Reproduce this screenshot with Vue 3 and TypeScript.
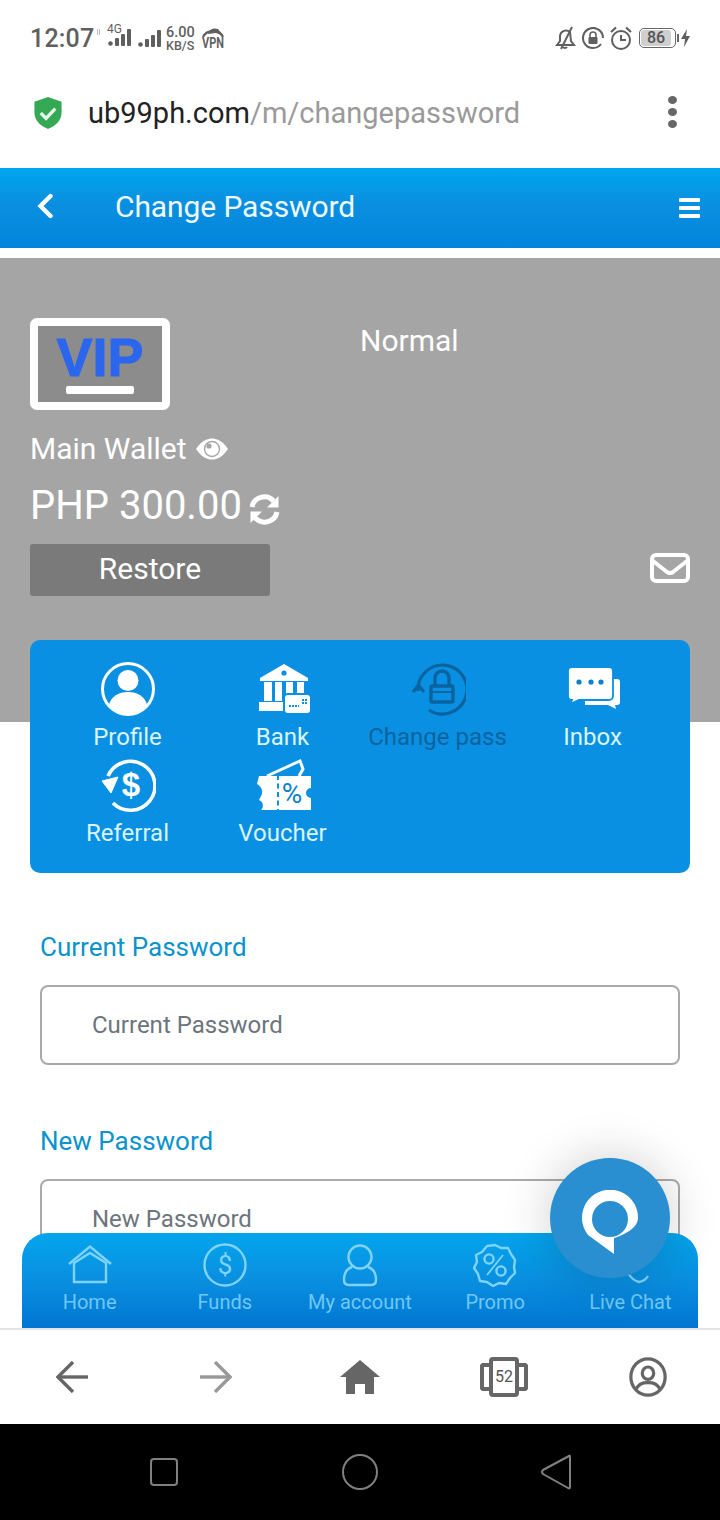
<script setup lang="ts">
const title: string = 'Change Password'
</script>

<template>
  <div class="phone">
    <div class="status">
      <div class="status-left">
        <span class="time">12:07</span>
        <i class="sim-mark"></i>
        <span class="sim1">
          <span class="fourg">4G</span>
          <svg width="23" height="17" viewBox="0 0 23 17"><g fill="#5f5f5f"><circle cx="2.5" cy="14.5" r="2.3"/><rect x="7" y="9" width="4" height="8" rx="1"/><rect x="13" y="5" width="4" height="12" rx="1"/><rect x="19" y="0" width="4" height="17" rx="1"/></g></svg>
        </span>
        <svg class="sig2" width="23" height="17" viewBox="0 0 23 17"><g fill="#5f5f5f"><circle cx="2.5" cy="14.5" r="2.3"/><rect x="7" y="9" width="4" height="8" rx="1"/><rect x="13" y="5" width="4" height="12" rx="1"/><rect x="19" y="0" width="4" height="17" rx="1"/></g></svg>
        <span class="speed"><span>6.00</span><span class="kb">KB/S</span></span>
        <span class="vpn">
          <svg width="24" height="11" viewBox="0 0 24 11"><path d="M2 11 A11 10 0 0 1 22 11" fill="none" stroke="#5f5f5f" stroke-width="2.2"/><path d="M7 8 A7 6 0 0 1 17 3 L22 9 L15 7 Z" fill="#5f5f5f"/></svg>
          <b>VPN</b>
        </span>
      </div>
      <div class="status-right">
        <svg width="22" height="24" viewBox="0 0 22 24" fill="none" stroke="#5f5f5f" stroke-width="2"><path d="M3 19 L6 15 V10 A6 6 0 0 1 16 6 L17 15 L20 19 Z"/><path d="M7 23 L18 1"/><path d="M9 21 a2.5 2.5 0 0 0 4 0"/></svg>
        <svg width="22" height="22" viewBox="0 0 22 22" fill="none" stroke="#5f5f5f" stroke-width="2"><path d="M19 17 A10 10 0 1 1 21 11"/><rect x="6.500" y="10" width="9" height="7" rx="1" fill="#5f5f5f" stroke="none"/><path d="M8 10 V8 a3 3 0 0 1 6 0 V10" stroke-width="1.6"/></svg>
        <svg width="22" height="24" viewBox="0 0 22 24" fill="none" stroke="#5f5f5f" stroke-width="2"><circle cx="11" cy="14" r="9"/><path d="M11 9 V14 H16"/><path d="M1 6 L6 1.500 M21 6 L16 1.500" stroke-width="2.2"/></svg>
        <span class="battery"><span class="battery-fill">86</span></span>
        <span class="battery-cap"></span>
        <svg class="bolt" width="9" height="18" viewBox="0 0 9 18"><path d="M6 0 L0 10 H4 L3 18 L9 7 H5 Z" fill="#5f5f5f"/></svg>
      </div>
    </div>

    <div class="urlbar">
      <svg class="shield" width="28" height="32" viewBox="0 0 28 33"><path d="M14 0 L28 5 V16 C28 25 21 30 14 33 C7 30 0 25 0 16 V5 Z" fill="#34a853"/><path d="M6.500 16.500 L12 22 L21.500 12" fill="none" stroke="#e8f5ea" stroke-width="3.400"/></svg>
      <div class="url"><span class="host">ub99ph.com</span><span class="path">/m/changepassword</span></div>
      <div class="kebab"><i></i><i></i><i></i></div>
    </div>

    <header class="topbar">
      <svg class="back" width="18" height="26" viewBox="0 0 18 26"><path d="M14.500 3 L4.500 13 L14.500 23" fill="none" stroke="#fff" stroke-width="4.400" stroke-linecap="round"/></svg>
      <h1>{{ title }}</h1>
      <div class="burger"><i></i><i></i><i></i></div>
    </header>

    <main class="viewport">
      <section class="hero">
        <div class="hero-top">
          <div class="vip"><span class="vip-text">VIP</span><span class="vip-bar"></span></div>
          <div class="level">Normal</div>
        </div>
        <div class="wallet">
          <span>Main Wallet</span>
          <svg width="34" height="22" viewBox="0 0 34 22"><path d="M1 11 C7 2 13 0.500 17 0.500 C21 0.500 27 2 33 11 C27 20 21 21.500 17 21.500 C13 21.500 7 20 1 11 Z" fill="#fff"/><circle cx="17" cy="11" r="8.200" fill="#a5a5a5"/><circle cx="17" cy="11" r="6.800" fill="#fff"/><circle cx="14" cy="8" r="2.600" fill="#a5a5a5"/></svg>
        </div>
        <div class="amount">
          <span>PHP 300.00</span>
          <svg width="31" height="31" viewBox="0 0 31 31" fill="none"><path d="M3 13 A12.500 12.500 0 0 1 24.500 7" stroke="#fff" stroke-width="5"/><path d="M29.500 2 V13.500 H18 Z" fill="#fff"/><path d="M28 18 A12.500 12.500 0 0 1 6.500 24" stroke="#fff" stroke-width="5"/><path d="M1.500 29 V17.500 H13 Z" fill="#fff"/></svg>
        </div>
        <div class="actions">
          <button class="restore" type="button">Restore</button>
          <svg class="mail" width="40" height="30" viewBox="0 0 40 30" fill="none" stroke="#fff" stroke-width="4"><rect x="2" y="2" width="36" height="26" rx="4"/><path d="M3 8 L17 19 Q20 21 23 19 L37 8"/></svg>
        </div>
      </section>

      <nav class="tiles">
        <a class="tile">
          <svg width="56" height="56" viewBox="0 0 56 56"><circle cx="28" cy="27" r="25.500" fill="none" stroke="#fff" stroke-width="3"/><circle cx="28" cy="18.500" r="10.500" fill="#fff"/><path d="M9 43 C11 34 19 30 28 30 C37 30 45 34 47 43 C42 49 35 52 28 52 C21 52 14 49 9 43 Z" fill="#fff"/></svg>
          <span>Profile</span>
        </a>
        <a class="tile">
          <svg width="56" height="56" viewBox="0 0 56 56" fill="#fff"><path d="M29 2 L53 16 V19 H5 V16 Z"/><rect x="9" y="20" width="8" height="19"/><rect x="20" y="20" width="7" height="19"/><rect x="31" y="20" width="7" height="19"/><rect x="42" y="20" width="7" height="14"/><rect x="4" y="40" width="26" height="9"/><rect x="29" y="32" width="27" height="20" rx="4" stroke="#0a90e2" stroke-width="2"/><circle cx="29" cy="11" r="2.600" fill="#0a90e2"/><path d="M34 44 H44 M47 38 H52 M47 41 H52" stroke="#0a90e2" stroke-width="1.800" stroke-dasharray="2 1"/></svg>
          <span>Bank</span>
        </a>
        <a class="tile active">
          <svg width="56" height="56" viewBox="0 0 56 56" fill="none" stroke="#0a639f" stroke-width="3.200"><path d="M8 29 A24.500 24.500 0 1 1 19 48"/><path d="M3 30 L8.500 23 L14 30"/><path d="M25 24 V16 a7 7 0 0 1 14 0 V24" stroke-width="3.400"/><rect x="21" y="24" width="22" height="16" rx="1.500" stroke-width="3.400"/><path d="M21 30 H43" stroke-width="1.800"/></svg>
          <span>Change pass</span>
        </a>
        <a class="tile">
          <svg width="56" height="56" viewBox="0 0 56 56"><path d="M20 17 H52 a3 3 0 0 1 3 3 V40 a3 3 0 0 1 -3 3 H50 L51 47 L43 43 H20 Z" fill="#fff"/><path d="M7 5 H44 a4 4 0 0 1 4 4 V34 a4 4 0 0 1 -4 4 H14 L5 42 L7 38 A4 4 0 0 1 3 34 V9 a4 4 0 0 1 4 -4 Z" fill="#fff" stroke="#0a90e2" stroke-width="1.800"/><g fill="#0b7fc7"><circle cx="14" cy="20" r="2.600"/><circle cx="26" cy="20" r="2.600"/><circle cx="36" cy="20" r="2.600"/></g></svg>
          <span>Inbox</span>
        </a>
        <a class="tile">
          <svg width="56" height="56" viewBox="0 0 56 56" fill="none"><path d="M8 18 A24.500 24.500 0 1 1 13 45" stroke="#fff" stroke-width="3.600"/><path d="M2 23 L18 19 L11 35 Z" fill="#fff" stroke="#fff" stroke-width="1" stroke-linejoin="round"/><text x="31" y="38" text-anchor="middle" font-family="'Liberation Sans',sans-serif" font-weight="700" font-size="33" fill="#fff">$</text></svg>
          <span>Referral</span>
        </a>
        <a class="tile">
          <svg width="56" height="56" viewBox="0 0 56 56"><path d="M12 18 L45 3 L48 11 L44 18" fill="none" stroke="#fff" stroke-width="3"/><path d="M4 18 H56 V30 a5 5 0 0 0 0 10 V52 H6 a6 6 0 0 0 -2 -10 L7 36 a9 9 0 0 0 -5 -10 Z" fill="#fff"/><path d="M23 17 V54" stroke="#0a90e2" stroke-width="2" stroke-dasharray="5 3.500"/><text x="37" y="45" text-anchor="middle" font-family="Roboto,sans-serif" font-weight="400" font-size="28" fill="#0a7fc9">%</text></svg>
          <span>Voucher</span>
        </a>
      </nav>

      <form class="form" @submit.prevent>
        <label class="field">
          <span>Current Password</span>
          <input type="text" placeholder="Current Password" />
        </label>
        <label class="field">
          <span>New Password</span>
          <input type="text" placeholder="New Password" />
        </label>
      </form>

      <nav class="tabbar">
        <a class="tab">
          <svg width="46" height="40" viewBox="0 0 46 40" fill="none" stroke="#7fd3f8" stroke-width="2.400"><path d="M2 19 L23 1.500 L44 19"/><path d="M7 18 L23 8 L39 18 V37 H7 Z"/></svg>
          <span>Home</span>
        </a>
        <a class="tab">
          <svg width="46" height="44" viewBox="0 0 46 44"><circle cx="23" cy="22" r="20.500" fill="none" stroke="#7fd3f8" stroke-width="2.400"/><text x="23" y="31" text-anchor="middle" font-family="Roboto,sans-serif" font-size="26" fill="#7fd3f8">$</text></svg>
          <span>Funds</span>
        </a>
        <a class="tab">
          <svg width="36" height="42" viewBox="0 0 36 42" fill="none" stroke="#7fd3f8" stroke-width="2.400"><circle cx="18" cy="13" r="11.500"/><path d="M10 23 C4 25 2 30 2 36 Q2 41 7 41 H29 Q34 41 34 36 C34 30 32 25 26 23"/></svg>
          <span>My account</span>
        </a>
        <a class="tab">
          <svg width="44" height="44" viewBox="0 0 44 44" fill="none" stroke="#7fd3f8" stroke-width="2.400"><path d="M22 2 L28 5 L35 5 L38 11 L42 17 L41 24 L42 30 L37 35 L33 41 L26 40 L20 43 L14 39 L7 38 L5 31 L1 25 L4 19 L3 12 L9 9 L14 3 Z" stroke-linejoin="round"/><circle cx="16" cy="16" r="4.600"/><circle cx="28" cy="28" r="4.600"/><path d="M30 12 L14 32" stroke-width="1.800"/></svg>
          <span>Promo</span>
        </a>
        <a class="tab">
          <svg width="44" height="44" viewBox="0 0 44 44" fill="none" stroke="#7fd3f8" stroke-width="2.400"><path d="M20 30 Q24 37 31 39 Q37 38 40 33"/></svg>
          <span>Live Chat</span>
        </a>
      </nav>

      <button class="fab" type="button" aria-label="Chat">
        <svg width="60" height="66" viewBox="0 0 60 66"><path d="M34 48 C44 45 58 38 58 28 A28 28 0 1 0 8 45 L34 64 Z" fill="#fff"/><circle cx="30" cy="29" r="18" fill="#2a8fd0"/></svg>
      </button>
    </main>

    <div class="browserbar">
      <svg width="32" height="32" viewBox="0 0 32 32" fill="none" stroke="#666" stroke-width="3.400"><path d="M2 16 H32"/><path d="M17 1 L2 16 L17 31"/></svg>
      <svg width="32" height="32" viewBox="0 0 32 32" fill="none" stroke="#999" stroke-width="3.400"><path d="M0 16 H30"/><path d="M15 1 L30 16 L15 31"/></svg>
      <svg width="40" height="34" viewBox="0 0 40 34"><path d="M20 0 L40 17 H34 V34 H25 V24 H15 V34 H6 V17 H0 Z" fill="#666"/></svg>
      <span class="tabs-count">
        <span class="wing wing-left"></span><span class="count">52</span><span class="wing wing-right"></span>
      </span>
      <svg width="40" height="40" viewBox="0 0 40 42" fill="none" stroke="#666" stroke-width="3.400"><ellipse cx="20" cy="21" rx="18" ry="19"/><ellipse cx="20" cy="17" rx="6" ry="6.500"/><path d="M7 35 C10 28 14 27 20 27 C26 27 30 28 33 35"/></svg>
    </div>

    <div class="sysbar">
      <svg width="28" height="28" viewBox="0 0 28 28" fill="none" stroke="#808080" stroke-width="2"><rect x="1" y="1" width="26" height="26" rx="3"/></svg>
      <svg width="36" height="36" viewBox="0 0 36 36" fill="none" stroke="#808080" stroke-width="2"><circle cx="18" cy="18" r="17"/></svg>
      <svg width="30" height="36" viewBox="0 0 30 36" fill="none" stroke="#808080" stroke-width="2"><path d="M28 2 Q29 1 29 3 V33 Q29 35 27 34 L2 20 Q0 18 2 16 Z" stroke-linejoin="round"/></svg>
    </div>
  </div>
</template>

<style>
html, body { margin: 0; padding: 0; background: #fff; }
</style>

<style scoped>
* { box-sizing: border-box; }
.phone {
  width: 720px;
  height: 1520px;
  display: flex;
  flex-direction: column;
  overflow: hidden;
  font-family: Roboto, "Liberation Sans", sans-serif;
  background: #fff;
}
.status {
  height: 72px;
  flex: none;
  padding: 4px 30px 0;
  display: flex;
  justify-content: space-between;
  align-items: center;
  color: #5f5f5f;
}
.status-left { display: flex; align-items: center; }
.status-right { display: flex; align-items: center; }
.time { font-size: 25px; font-weight: 500; letter-spacing: 0.2px; width: 67px; }
.sim-mark { width: 3px; height: 6px; margin-top: -12px; border-left: 1px solid #bbb; border-right: 1px solid #bbb; margin-right: 8px; }
.sim1 { position: relative; display: flex; width: 26px; height: 20px; align-items: flex-end; margin-top: -4px; }
.fourg { position: absolute; left: -1px; top: -3px; font-size: 12px; line-height: 13px; }
.sig2 { margin-left: 4px; margin-top: 0; }
.speed { display: flex; flex-direction: column; margin-left: 5px; font-size: 14.5px; line-height: 13px; width: 33px; font-weight: 500; align-items: flex-start; margin-top: 2px; }
.kb { font-size: 12.5px; }
.vpn { display: flex; flex-direction: column; align-items: center; margin-left: 2px; width: 24px; margin-top: -2px; }
.vpn b { font-size: 14px; line-height: 12px; font-weight: 700; transform: scaleX(0.78); }
.status-right svg { margin-left: 6px; }
.battery { margin-left: 7px; width: 37px; height: 20px; border: 1.5px solid #666; border-radius: 5px; padding: 1px; display: flex; }
.battery-fill { width: 30px; background: #cfcfcf; border-radius: 3px; font-size: 16px; line-height: 15px; font-weight: 500; text-align: center; color: #555; }
.battery-cap { width: 2px; height: 8px; background: #666; margin-left: 1px; }
.status-right .bolt { margin-left: 2px; }

.urlbar { height: 96px; flex: none; display: flex; align-items: center; position: relative; padding: 0 0 14px 34px; }
.shield { flex: none; }
.url { margin-left: 26px; font-size: 29px; white-space: nowrap; }
.host { color: #222; }
.path { color: #9a9a9a; }
.kebab { position: absolute; right: 43px; top: 24px; display: flex; flex-direction: column; gap: 4px; }
.kebab i { width: 9px; height: 8px; border-radius: 50%; background: #666; display: block; }

.topbar {
  height: 80px;
  flex: none;
  display: flex;
  align-items: center;
  padding: 0 20px 0 36px;
  background: linear-gradient(#00a6ee, #0a8fe0 45%, #0085dc);
  color: #fff;
}
.back { margin-top: -4px; }
h1 { margin: -4px 0 0 61px; font-size: 30px; font-weight: 400; flex: 1; letter-spacing: -0.1px; color: #f0f9fe; }
.burger { display: flex; flex-direction: column; gap: 4px; }
.burger i { display: block; width: 21px; height: 4px; background: #fff; border-radius: 1px; }

.viewport { flex: 1; position: relative; overflow: hidden; padding-top: 10px; background: #fff; }
.hero { background: #a5a5a5; padding: 60px 30px 126px; color: #fff; }
.hero-top { display: flex; height: 92px; }
.vip { width: 140px; height: 92px; border: 8px solid #fff; border-radius: 7px; background: #8c8c8c; position: relative; display: flex; justify-content: center; }
.vip-text { color: #2b66ee; font-family: "Liberation Sans", sans-serif; font-size: 54px; font-weight: 700; line-height: 56px; height: 56px; margin-top: 3px; -webkit-text-stroke: 1px #2b66ee; }
.vip-bar { position: absolute; left: 28px; bottom: 8px; width: 68px; height: 8px; background: #fff; border-radius: 2px; }
.level { margin-left: 190px; font-size: 30px; line-height: 46px; }
.wallet { margin-top: 20px; display: flex; align-items: center; gap: 8px; font-size: 30px; line-height: 38px; height: 38px; }
.amount { margin-top: 14px; display: flex; align-items: center; gap: 7px; font-size: 40px; line-height: 48px; height: 48px; }
.amount svg { margin-top: 6px; }
.actions { margin-top: 14px; display: flex; justify-content: space-between; align-items: center; }
.mail { margin-top: -4px; }
.restore { width: 240px; height: 52px; border: 0; border-radius: 3px; background: #7a7a7a; color: #fff; font: 400 30px Roboto, sans-serif; padding: 0 0 4px; }

.tiles {
  margin: -82px 30px 0;
  height: 233px;
  background: #0a90e2;
  border-radius: 10px;
  padding: 22px 20px 0;
  display: grid;
  grid-template-columns: repeat(4, 155px);
  grid-auto-rows: 96px;
}
.tile { display: flex; flex-direction: column; align-items: center; color: #d8f4ff; font-size: 24px; line-height: 28px; white-space: nowrap; }
.tile svg { flex: none; margin-bottom: 5px; }
.tile.active { color: #0a639f; }

.form { padding: 60px 40px 0; display: flex; flex-direction: column; gap: 62px; }
.field { display: flex; flex-direction: column; gap: 24px; }
.field span { font-size: 26px; line-height: 28px; color: #0a93cc; }
.field input {
  height: 80px;
  border: 2px solid #aaa;
  border-radius: 8px;
  padding: 0 50px;
  background: #fff;
  font: 400 24px Roboto, sans-serif;
  outline: 0;
}
.field input::placeholder { color: #6c757d; opacity: 1; }

.tabbar {
  position: absolute;
  left: 22px;
  right: 22px;
  bottom: 0;
  height: 95px;
  border-radius: 26px 26px 0 0;
  background: linear-gradient(#03a5ec, #0a8fe0 50%, #0076d2);
  display: grid;
  grid-template-columns: repeat(5, 135.2px);
}
.tab { display: flex; flex-direction: column; align-items: center; color: #6ec8f4; font-size: 20px; line-height: 24px; padding-top: 10px; white-space: nowrap; }
.tab svg { height: 44px; flex: none; margin-bottom: 3px; }

.fab {
  position: absolute;
  left: 550px;
  top: 910px;
  width: 120px;
  height: 120px;
  border-radius: 50%;
  border: 0;
  padding: 0;
  background: #2a8fd0;
  box-shadow: 0 0 50px rgba(0, 0, 0, 0.2);
  display: flex;
  align-items: center;
  justify-content: center;
}
.fab svg { margin-top: 10px; }

.browserbar {
  height: 96px;
  flex: none;
  background: #fff;
  border-top: 2px solid #e4e4e4;
  display: grid;
  grid-template-columns: repeat(5, 144px);
  justify-items: center;
  align-items: center;
}
.tabs-count { display: flex; align-items: center; }
.wing { width: 9px; height: 28px; border: 4px solid #666; }
.wing-left { border-right: 0; border-radius: 4px 0 0 4px; }
.wing-right { border-left: 0; border-radius: 0 4px 4px 0; }
.count { width: 30px; height: 40px; border: 4px solid #666; border-radius: 4px; font-size: 16px; line-height: 32px; text-align: center; color: #555; }

.sysbar {
  height: 96px;
  flex: none;
  background: #000;
  display: grid;
  grid-template-columns: repeat(3, 196px);
  justify-content: center;
  justify-items: center;
  align-items: center;
}
</style>
